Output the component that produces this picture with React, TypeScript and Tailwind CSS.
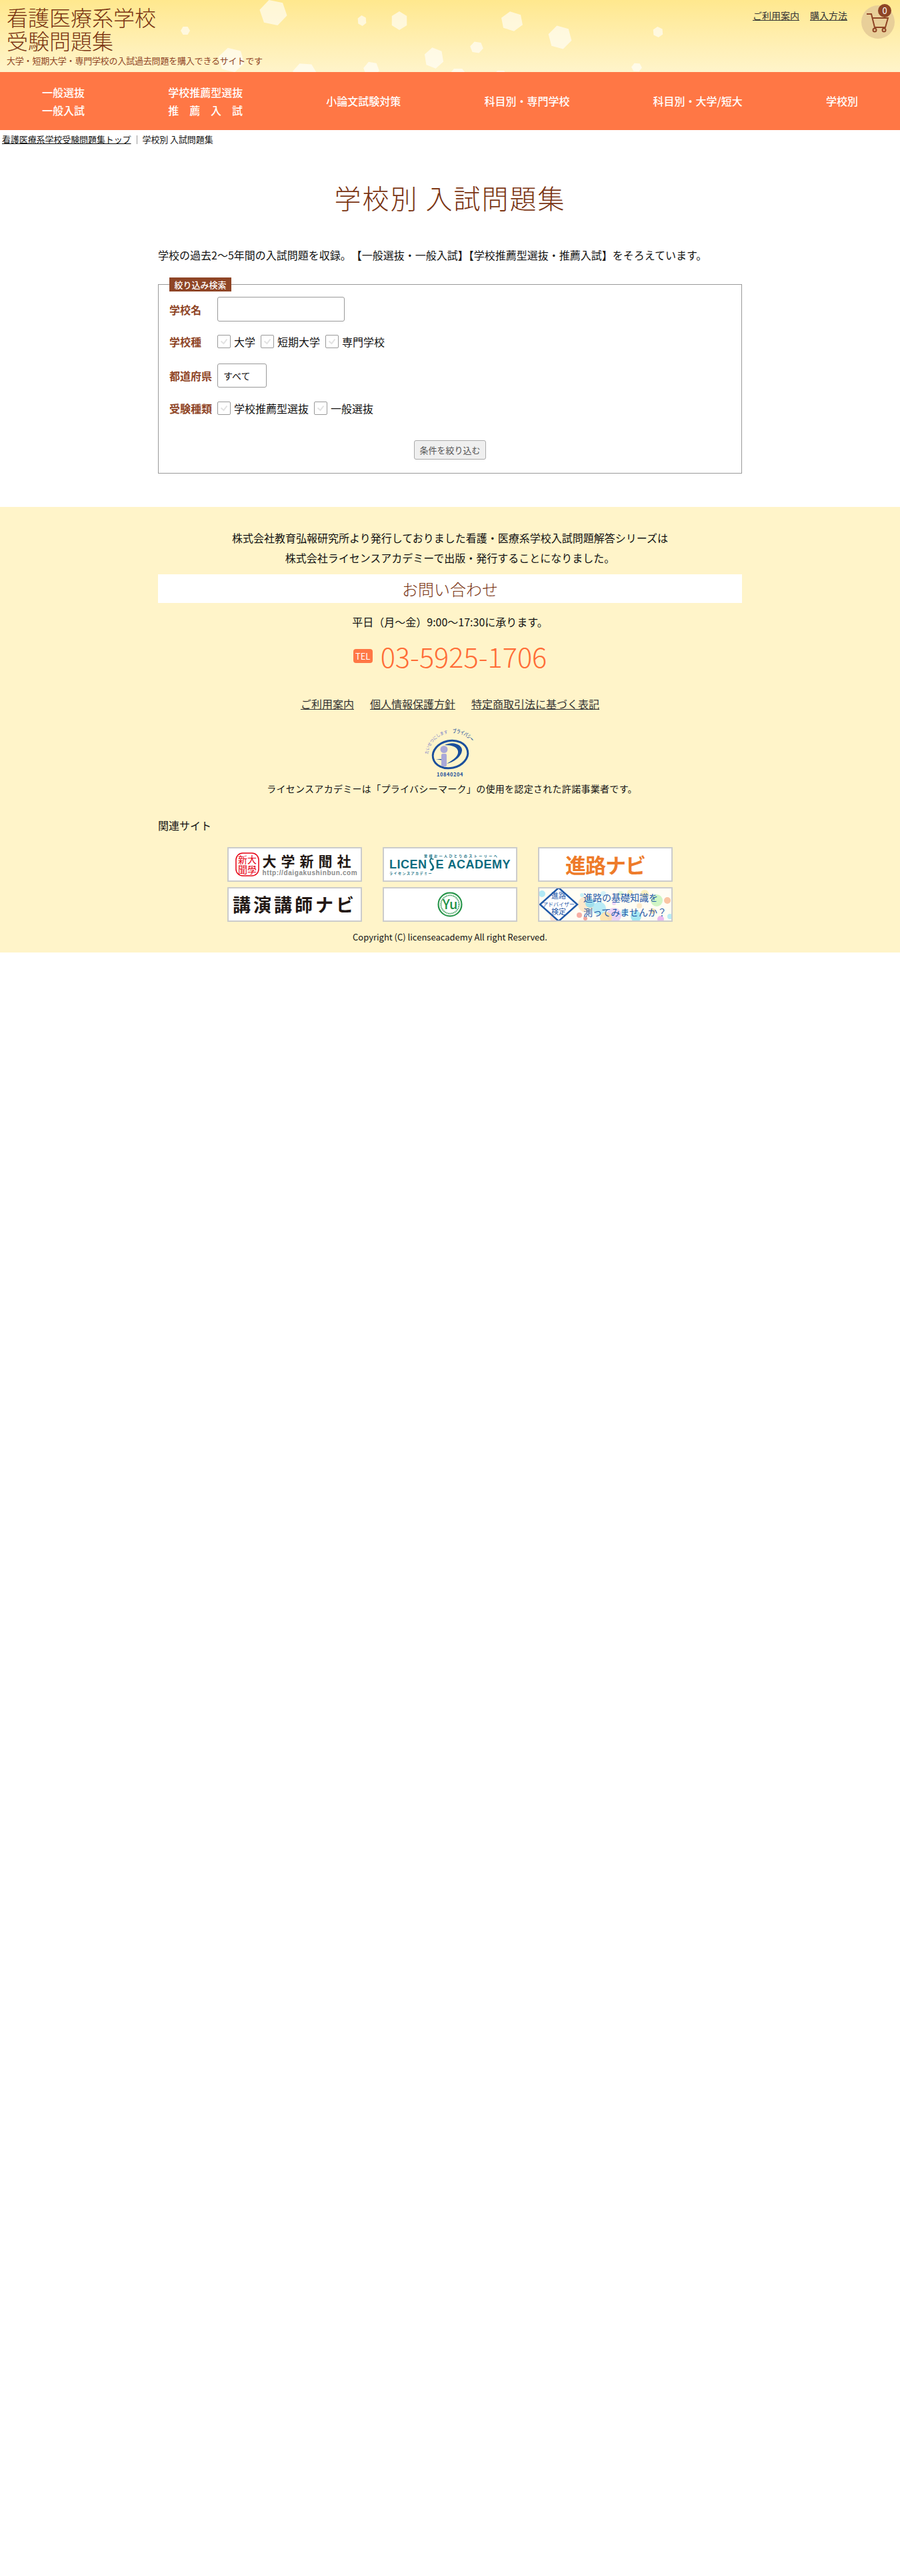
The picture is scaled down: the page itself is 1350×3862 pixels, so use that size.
import { ReactNode } from 'react'

const hexes = [
    [410, 19, 21, 20, 12], [543, 31, 7, 8, 25], [599, 31, 13, 14, 30], [278, 46, 7, 7, 0],
    [347, 90, 20, 19, 15], [651, 87, 15, 16, 20], [557, 104, 12, 12, 10], [457, 108, 18, 14, 5],
    [768, 32, 17, 15, 20], [840, 56, 18, 18, 15], [987, 48, 8, 8, 25], [715, 71, 10, 9, 10],
    [955, 101, 8, 7, 5], [687, 110, 12, 8, 0], [751, 112, 10, 7, 0],
]

const hexPoints = ([cx, cy, rx, ry, rot]: number[]) =>
    [0, 1, 2, 3, 4, 5]
        .map((i) => {
            const a = ((i * 60 + rot) * Math.PI) / 180
            return `${cx + rx * Math.cos(a)},${cy + ry * Math.sin(a)}`
        })
        .join(' ')

const bubbles = [
    [4, 8, 5, '#9fe4f5'], [30, 6, 3, '#fbd7a8'], [60, 40, 4, '#f59a8e'], [70, 24, 12, '#fde3c0'],
    [22, 44, 6, '#fdd9c9'], [64, 10, 3, '#b9ecf5'], [69, 45, 3, '#f08f84'], [76, 22, 7, '#8adcf2'],
    [90, 30, 10, '#a7e6f5'], [112, 40, 11, '#e6c8f5'], [100, 44, 9, '#ffe0a0'], [128, 36, 5, '#a7e6f5'],
    [145, 42, 8, '#8fe0f0'], [182, 46, 5, '#e3a8ee'], [192, 18, 5, '#f9b78f'], [176, 18, 9, '#c4f2b8'],
    [158, 8, 6, '#fdeeb5'], [122, 8, 4, '#d4f3d0'], [136, 6, 4, '#fff0b5'], [96, 8, 4, '#c9eef8'],
    [196, 42, 4, '#a7e6f5'], [170, 34, 4, '#ffd9a0'], [112, 22, 3, '#e6c8f5'], [150, 26, 4, '#fde3c0'],
] as [number, number, number, string][]

const Check = ({ children }: { children: ReactNode }) => (
    <label className="flex items-center">
        <span className="flex h-5 w-5 items-center justify-center rounded-[2px] border border-[#999999] bg-white">
            <svg width="12" height="10" viewBox="0 0 12 10" fill="none">
                <path d="M1.5 4.5 5.5 8 10.5 1.5" stroke="#e2e2e2" strokeWidth="2" />
            </svg>
        </span>
        <span className="ml-[5px] text-[16px]">{children}</span>
    </label>
)

const Banner = ({ children }: { children: ReactNode }) => (
    <a className="relative flex h-[52px] w-[202px] items-center justify-center overflow-hidden border-2 border-[#cccccc] bg-white">
        {children}
    </a>
)

const navItems = ['小論文試験対策', '科目別・専門学校', '科目別・大学/短大', '学校別']

const App = () => (
    <div className="min-h-[3862px] bg-white text-[#111111] [font-family:'Noto_Sans_CJK_JP','Noto_Sans',sans-serif]">
        <header className="relative flex h-[108px] justify-between overflow-hidden bg-linear-to-b from-[#ffe88e] to-[#fff4ca]">
            <svg className="absolute inset-0" width="1350" height="108">
                {hexes.map((h) => (
                    <polygon key={h.join()} points={hexPoints(h)} fill="#ffffff" opacity="0.62" />
                ))}
            </svg>
            <div className="relative pl-[10px] pt-[8px]">
                <p className="text-[32px] font-light leading-[35px] text-[#7a3412]">
                    看護医療系学校
                    <br />
                    受験問題集
                </p>
                <p className="mt-[3px] text-[13px] leading-[20px] tracking-[-0.2px] text-[#8f4526]">
                    大学・短期大学・専門学校の入試過去問題を購入できるサイトです
                </p>
            </div>
            <div className="relative flex items-start pr-2 pt-2">
                <div className="mt-[4px] flex gap-4 text-[14px] leading-[22px] text-[#333333] underline">
                    <a>ご利用案内</a>
                    <a>購入方法</a>
                </div>
                <div className="relative ml-[21px] h-[50px] w-[50px] rounded-full bg-[#e8cf99]">
                    <svg className="absolute left-0 top-0" width="50" height="50" fill="none" stroke="#8f4526" strokeWidth="2">
                        <path d="M8 13h7l5 20h16l4-14H16" />
                        <circle cx="20" cy="37" r="2.5" />
                        <circle cx="34" cy="37" r="2.5" />
                    </svg>
                    <span className="absolute left-[25px] top-[-2px] flex h-5 w-5 items-center justify-center rounded-full bg-[#8f4526] text-[13px] text-white">
                        0
                    </span>
                </div>
            </div>
        </header>

        <nav className="flex h-[87px] items-center justify-between bg-[#ff7745] px-[63px] text-[16px] font-medium leading-[27px] text-white">
            <a>
                一般選抜
                <br />
                一般入試
            </a>
            <a className="w-[112px]">
                学校推薦型選抜
                <span className="flex justify-between">
                    <span>推</span>
                    <span>薦</span>
                    <span>入</span>
                    <span>試</span>
                </span>
            </a>
            {navItems.map((item) => (
                <a key={item}>{item}</a>
            ))}
        </nav>

        <div className="flex h-[28px] items-center pl-[3px] text-[13px] tracking-[-0.1px]">
            <a className="underline">看護医療系学校受験問題集トップ</a>
            <span className="mx-[8px] h-[13px] border-l border-[#999999]" />
            <span>学校別 入試問題集</span>
        </div>

        <main className="mx-auto w-[876px] pb-[50px]">
            <h1 className="pt-[43px] text-center text-[40px] font-light leading-[60px] tracking-[2px] text-[#7a3412]">
                学校別 入試問題集
            </h1>
            <p className="mt-[41px] text-[16px] leading-[30px]">
                学校の過去2〜5年間の入試問題を収録。
                <span className="ml-2">【一般選抜・一般入試】【学校推薦型選抜・推薦入試】をそろえています。</span>
            </p>
            <fieldset className="mt-[19px] h-[294px] border border-[#999999] px-4">
                <legend className="flex h-[21px] w-[93px] items-center justify-center bg-[#8f4526] text-[13px] font-medium leading-[21px] text-white">
                    絞り込み検索
                </legend>
                <div className="mt-[8px] flex items-center">
                    <span className="w-[72px] text-[16px] font-bold text-[#8f4526]">学校名</span>
                    <input className="h-[37px] w-[191px] rounded-[3px] border border-[#999999]" />
                </div>
                <div className="mt-[18px] flex items-center">
                    <span className="w-[72px] text-[16px] font-bold text-[#8f4526]">学校種</span>
                    <div className="flex gap-[8px]">
                        <Check>大学</Check>
                        <Check>短期大学</Check>
                        <Check>専門学校</Check>
                    </div>
                </div>
                <div className="mt-[21px] flex items-center">
                    <span className="w-[72px] text-[16px] font-bold text-[#8f4526]">都道府県</span>
                    <select className="h-[36px] w-[74px] appearance-none rounded-[3px] border border-[#999999] bg-white pl-2 text-[14px]">
                        <option>すべて</option>
                    </select>
                </div>
                <div className="mt-[19px] flex items-center">
                    <span className="w-[72px] text-[16px] font-bold text-[#8f4526]">受験種類</span>
                    <div className="flex gap-[8px]">
                        <Check>学校推薦型選抜</Check>
                        <Check>一般選抜</Check>
                    </div>
                </div>
                <div className="mt-[36px] flex justify-center">
                    <button className="h-[29px] w-[108px] rounded-[3px] border border-[#aaaaaa] bg-[#efefef] text-[13px] text-[#555555]">
                        条件を絞り込む
                    </button>
                </div>
            </fieldset>
        </main>

        <footer className="h-[668px] bg-[#fff4c9] pt-[31px]">
            <div className="mx-auto flex w-[876px] flex-col items-center">
                <p className="text-center text-[16px] leading-[30px]">
                    株式会社教育弘報研究所より発行しておりました看護・医療系学校入試問題解答シリーズは
                    <br />
                    株式会社ライセンスアカデミーで出版・発行することになりました。
                </p>
                <h2 className="mt-[10px] h-[43px] w-full bg-white text-center text-[24px] font-light leading-[43px] text-[#7a3412]">
                    お問い合わせ
                </h2>
                <p className="mt-[13px] text-[16px] leading-[30px]">平日（月〜金）9:00〜17:30に承ります。</p>
                <div className="mt-[6px] flex h-[60px] items-center gap-3">
                    <span className="flex h-[21px] w-[29px] items-center justify-center rounded-[4px] bg-[#ff7745] text-[13px] leading-[21px] text-white">
                        TEL
                    </span>
                    <span className="text-[41.5px] font-light leading-[60px] text-[#ff6c36]">03-5925-1706</span>
                </div>
                <div className="mt-[30px] flex gap-6 text-[16px] leading-[24px] text-[#333333] underline">
                    <a>ご利用案内</a>
                    <a>個人情報保護方針</a>
                    <a>特定商取引法に基づく表記</a>
                </div>
                <svg className="mt-[26px] overflow-visible" width="70" height="72" viewBox="0 0 70 72">
                    <defs>
                        <path id="pm1" d="M2 38C4 20 18 7 39 5" />
                        <path id="pm2" d="M39 6C50 5 60 10 69 21" />
                    </defs>
                    <text fontSize="6.5" fill="#8f93c9" fontWeight="500">
                        <textPath href="#pm1" textLength="47" lengthAdjust="spacingAndGlyphs">たいせつにします</textPath>
                    </text>
                    <text fontSize="8" fill="#1b4f9c" fontWeight="500">
                        <textPath href="#pm2" textLength="33" lengthAdjust="spacingAndGlyphs">プライバシー</textPath>
                    </text>
                    <ellipse cx="35.5" cy="38" rx="26.5" ry="20.5" fill="none" stroke="#1b4f9c" strokeWidth="3" transform="rotate(-12 35.5 38)" />
                    <path d="M27 24C40 17 54 24 53 32 52 42 40 50 30 52 42 45 48 40 47 33 46 27 38 24 27 24Z" fill="#1b4f9c" />
                    <circle cx="26" cy="30.5" r="5.5" fill="#a9a8d8" />
                    <rect x="22" y="37" width="8" height="19" rx="2" fill="#a9a8d8" />
                    <path d="M14 45h8v1.5z" fill="#1b4f9c" />
                    <text x="35" y="71" textAnchor="middle" fontSize="7.5" fontWeight="700" letterSpacing="0.6" fill="#1b4f9c">
                        10840204
                    </text>
                </svg>
                <p className="mt-[7px] pl-[6px] text-[14px] leading-[20px] tracking-[0.3px]">
                    ライセンスアカデミーは「プライバシーマーク」の使用を認定された許諾事業者です。
                </p>
                <p className="mt-[33px] w-full text-[16px] leading-[24px]">関連サイト</p>
                <div className="mt-[21px] grid grid-cols-3 gap-x-[31px] gap-y-2">
                    <Banner>
                        <svg className="mr-[5px] shrink-0" width="36" height="36" viewBox="0 0 36 36">
                            <rect x="1" y="1" width="34" height="34" rx="10" fill="none" stroke="#e60012" strokeWidth="1.5" />
                            <text x="18" y="16" textAnchor="middle" fontSize="14" fill="#e60012">新大</text>
                            <text x="18" y="31" textAnchor="middle" fontSize="14" fill="#e60012">聞學</text>
                        </svg>
                        <div className="w-[138px] whitespace-nowrap">
                            <p className="text-[21px] font-bold leading-[25px] tracking-[7px] text-[#231815]">大学新聞社</p>
                            <p className="text-[10px] font-bold leading-[11px] tracking-[0.6px] text-[#8a8a8a] [font-family:'Liberation_Sans',sans-serif]">
                                http://daigakushinbun.com
                            </p>
                        </div>
                    </Banner>
                    <Banner>
                        <div className="w-[182px]">
                            <p className="whitespace-nowrap pl-[52px] text-[5px] font-bold leading-[6px] tracking-[2.5px] text-[#0d6b80]">皆様お一人ひとりのストーリーへ</p>
                            <p className="flex items-center whitespace-nowrap text-[18px] font-bold leading-[20px] tracking-[0.5px] text-[#0d6b80] [font-family:'Liberation_Sans',sans-serif]">
                                LICEN
                                <svg width="13" height="20" viewBox="0 0 13 32" className="overflow-visible">
                                    <path d="M11 4C2-1 0 8 5 14s7 14-2 15M7 1C0 2 3 10 8 16s4 13-3 14" fill="none" stroke="#0d6b80" strokeWidth="2.5" />
                                </svg>
                                E&nbsp;ACADEMY
                            </p>
                            <p className="whitespace-nowrap text-[5px] font-bold leading-[6px] tracking-[1.5px] text-[#0d6b80]">ライセンスアカデミー</p>
                        </div>
                    </Banner>
                    <Banner>
                        <span className="text-[31px] font-bold tracking-[-1px] text-[#ee7b2a]">進路ナビ</span>
                    </Banner>
                    <Banner>
                        <span className="whitespace-nowrap text-[27px] font-bold tracking-[4px] text-[#231815]">講演講師ナビ</span>
                    </Banner>
                    <Banner>
                        <svg width="38" height="38" viewBox="0 0 38 38">
                            <circle cx="19" cy="19" r="17.5" fill="#e9f4ea" stroke="#1f9144" strokeWidth="2" />
                            <circle cx="19" cy="19" r="13.5" fill="#ffffff" stroke="#1f9144" strokeWidth="1.5" strokeDasharray="1.5 1" />
                            <text x="19" y="26" textAnchor="middle" fontSize="20" fontWeight="500" fill="#1f9144">Yu</text>
                        </svg>
                    </Banner>
                    <Banner>
                        <svg className="absolute left-0 top-0" width="198" height="48">
                            <rect width="198" height="48" fill="#fffdf4" />
                            {bubbles.map(([cx, cy, r, fill]) => (
                                <circle key={`${cx}-${cy}`} cx={cx} cy={cy} r={r} fill={fill} opacity="0.8" />
                            ))}
                            <polygon points="29,-1 57,24 29,49 1,24" fill="#ffffff" stroke="#1f58a8" strokeWidth="2.5" />
                            <g textAnchor="middle" fill="#1f58a8">
                                <text x="29" y="15" fontSize="11">進路</text>
                                <text x="29" y="27" fontSize="8">アドバイザー</text>
                                <text x="29" y="39" fontSize="11">検定</text>
                            </g>
                        </svg>
                        <p className="relative ml-[66px] w-[132px] whitespace-nowrap text-[14px] leading-[22px] text-[#1f58a8]">
                            進路の基礎知識を
                            <br />
                            測ってみませんか？
                        </p>
                    </Banner>
                </div>
                <p className="mt-[13px] text-[13px] leading-[20px]">Copyright (C) licenseacademy All right Reserved.</p>
            </div>
        </footer>
    </div>
)

export default App
